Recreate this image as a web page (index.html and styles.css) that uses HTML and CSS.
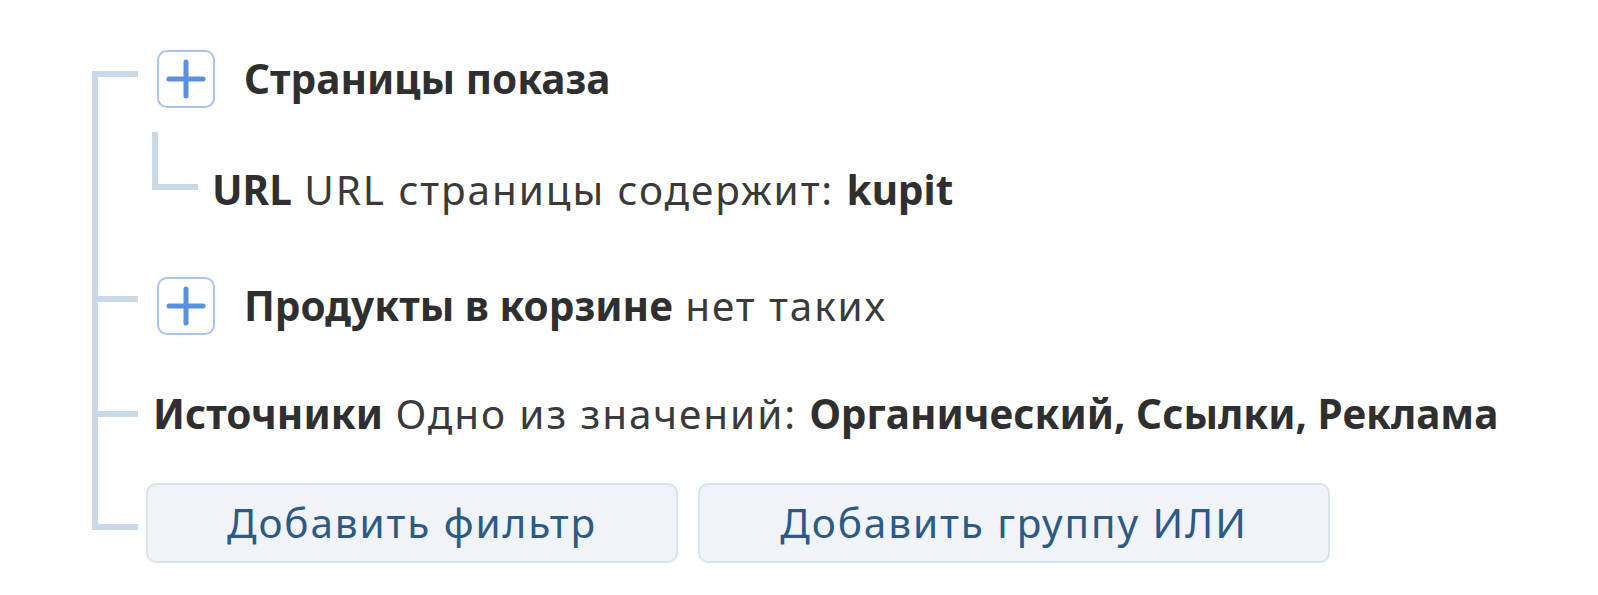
FILE: index.html
```
<!DOCTYPE html>
<html lang="ru">
<head>
<meta charset="utf-8">
<title>Фильтры</title>
<link rel="stylesheet" href="styles.css">
</head>
<body>
<div class="tree">
  <div class="node node-first">
    <div class="conn conn-a"><div class="seg-top"></div><div class="tick"></div><div class="seg-bot"></div></div>
    <div class="node-body">
      <div class="head">
        <span class="plus"><svg viewBox="0 0 54 54" width="54" height="54"><path d="M10 27H44M27 10V44" stroke="#5b8fe0" stroke-width="5" stroke-linecap="round" fill="none"/></svg></span>
        <span class="label"><b>Страницы показа</b></span>
      </div>
      <div class="child">
        <div class="child-conn"></div>
        <div class="line child-text"><b>URL</b> URL страницы содержит: <b>kupit</b></div>
      </div>
    </div>
  </div>
  <div class="node node-b">
    <div class="conn conn-b"><div class="seg-top"></div><div class="tick"></div><div class="seg-bot"></div></div>
    <div class="node-body">
      <div class="head">
        <span class="plus"><svg viewBox="0 0 54 54" width="54" height="54"><path d="M10 27H44M27 10V44" stroke="#5b8fe0" stroke-width="5" stroke-linecap="round" fill="none"/></svg></span>
        <span class="label"><b>Продукты в корзине</b> нет таких</span>
      </div>
    </div>
  </div>
  <div class="node node-c">
    <div class="conn conn-c"><div class="seg-top"></div><div class="tick"></div><div class="seg-bot"></div></div>
    <div class="node-body">
      <div class="line plain"><b>Источники</b> Одно из значений: <b>Органический, Ссылки, Реклама</b></div>
    </div>
  </div>
  <div class="node node-last">
    <div class="conn conn-d"><div class="seg-top"></div><div class="tick"></div><div class="seg-bot"></div></div>
    <div class="node-body buttons">
      <button class="btn btn-filter">Добавить фильтр</button>
      <button class="btn btn-group">Добавить группу ИЛИ</button>
    </div>
  </div>
</div>
</body>
</html>
```
FILE: styles.css
```
html, body {
  margin: 0;
  padding: 0;
  background: #ffffff;
}
body {
  font-family: "Noto Sans", "Open Sans", sans-serif;
  font-size: 40.5px;
  letter-spacing: 1.9px;
  color: #3a3a3a;
}
b {
  font-weight: 700;
  letter-spacing: 0;
  color: #2f2f2f;
}
.tree {
  margin-left: 92px;
  padding-top: 50px;
  display: flex;
  flex-direction: column;
}
.node {
  display: flex;
  align-items: stretch;
}
.conn {
  width: 46px;
  flex: none;
  display: flex;
  flex-direction: column;
}
.seg-top, .seg-bot {
  border-left: 6px solid #c9d9e7;
}
.seg-bot { flex: 1; }
.tick {
  height: 6px;
  background: #c9d9e7;
  flex: none;
}
.node-first .seg-top { border-left-color: transparent; }
.node-last .seg-bot { border-left-color: transparent; }
.conn-a .seg-top { height: 21px; }
.conn-b .seg-top { height: 19px; }
.conn-c .seg-top { height: 28px; }
.conn-d .seg-top { height: 41px; }

.node-body {
  display: flex;
  flex-direction: column;
}
.node-first .node-body { padding-bottom: 59px; }
.node-b .node-body { padding-bottom: 48px; }
.node-c .node-body { padding-bottom: 41px; }

.head {
  display: flex;
  align-items: center;
  height: 58px;
  margin-left: 19px;
}
.plus {
  width: 54px;
  height: 54px;
  border: 2px solid #a7c4ec;
  border-radius: 10px;
  flex: none;
  display: flex;
}
.label {
  margin-left: 29px;
  white-space: nowrap;
  line-height: 56px;
}
.line {
  line-height: 56px;
  height: 56px;
  white-space: nowrap;
}
.child {
  display: flex;
  margin-top: 24px;
  margin-left: 14px;
}
.child-conn {
  width: 40px;
  height: 52px;
  border-left: 6px solid #c9d9e7;
  border-bottom: 6px solid #c9d9e7;
  flex: none;
}
.child-text {
  margin-left: 14px;
  margin-top: 30px;
}
.plain {
  margin-left: 15px;
  margin-top: 3px;
}
.buttons {
  flex-direction: row;
  gap: 20px;
  margin-left: 8px;
}
.btn {
  font-family: "Noto Sans", "Open Sans", sans-serif;
  font-size: 40.5px;
  letter-spacing: 1.9px;
  color: #2c5a87;
  background: #f0f4f8;
  border: 2px solid #d8e3ed;
  border-radius: 10px;
  height: 80px;
  padding: 0;
  line-height: 1;
}
.btn-filter { width: 532px; }
.btn-group { width: 632px; }
```
